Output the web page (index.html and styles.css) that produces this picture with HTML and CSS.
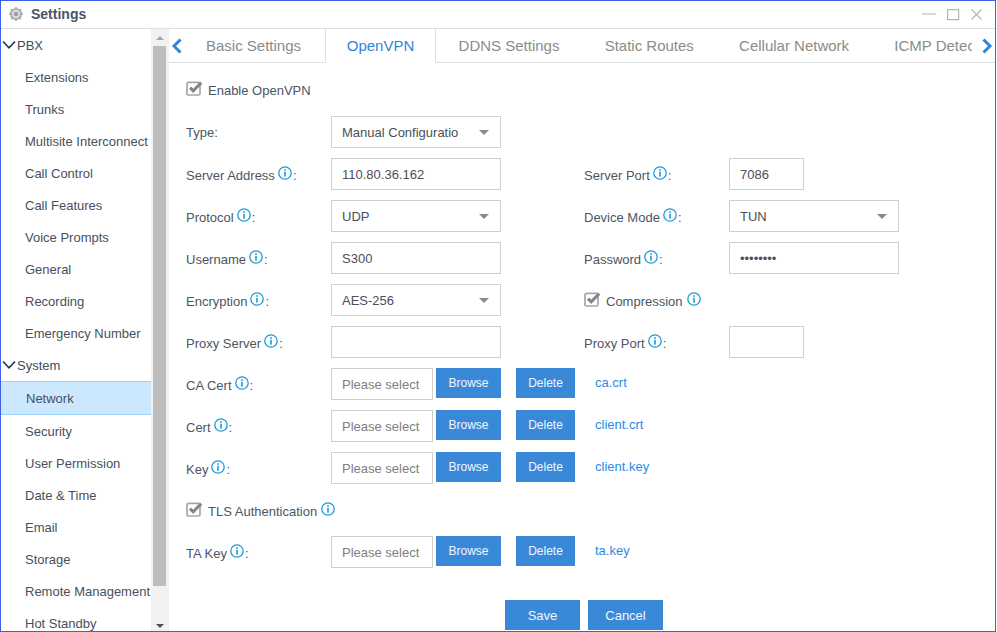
FILE: index.html
```html
<!DOCTYPE html>
<html lang="en">
<head>
<meta charset="utf-8">
<title>Settings</title>
<link rel="stylesheet" href="styles.css">
</head>
<body>
<svg class="defs" width="0" height="0" aria-hidden="true">
  <symbol id="info" viewBox="0 0 14 14">
    <circle cx="7" cy="7" r="6.2" fill="none" stroke="#1c9ad6" stroke-width="1.3"/>
    <rect x="6.2" y="5.8" width="1.6" height="4.8" fill="#1c9ad6"/>
    <rect x="6.2" y="3.2" width="1.6" height="1.6" fill="#1c9ad6"/>
  </symbol>
  <symbol id="check" viewBox="0 0 17 15">
    <rect x="1" y="1.4" width="13" height="12.6" rx="1.6" fill="#fff" stroke="#a6a6a6" stroke-width="1.7"/>
    <path d="M4 6.6 7.2 9.8 15.2 1.6" fill="none" stroke="#858585" stroke-width="3"/>
  </symbol>
  <symbol id="chev" viewBox="0 0 14 10">
    <path d="M1 1.5 7 7.8 13 1.5" fill="none" stroke="#2e3d54" stroke-width="1.8"/>
  </symbol>
</svg>
<div class="window">
  <header class="titlebar">
    <div class="title-left">
      <svg class="gear" width="14" height="14" viewBox="0 0 16 16">
        <circle cx="8" cy="8" r="7" fill="#a9aeb6"/>
        <circle cx="8" cy="8" r="4.8" fill="#dcdfe4"/>
        <circle cx="8" cy="8" r="2.6" fill="#989ea7"/>
        <path d="M8 0v2M8 14v2M0 8h2M14 8h2M2.3 2.3l1.4 1.4M12.3 12.3l1.4 1.4M2.3 13.7l1.4-1.4M12.3 3.7l1.4-1.4" stroke="#a0a5ad" stroke-width="1.6"/>
      </svg>
      <span class="title-text">Settings</span>
    </div>
    <div class="win-controls">
      <svg width="14" height="14" viewBox="0 0 14 14"><path d="M0 7h14" stroke="#c6c6c6" stroke-width="1.4"/></svg>
      <svg width="14" height="14" viewBox="0 0 14 14"><rect x="1.6" y="2.6" width="11" height="10" fill="none" stroke="#b4b4b4" stroke-width="1.2"/></svg>
      <svg width="14" height="14" viewBox="0 0 14 14"><path d="M1.5 2.5 11.5 12.5M11.5 2.5 1.5 12.5" stroke="#b4b4b4" stroke-width="1.1"/></svg>
    </div>
  </header>
  <div class="main">
    <nav class="sidebar">
      <div class="nav-head"><svg class="chev" width="14" height="10"><use href="#chev"/></svg>PBX</div>
      <a class="nav-item">Extensions</a>
      <a class="nav-item">Trunks</a>
      <a class="nav-item">Multisite Interconnect</a>
      <a class="nav-item">Call Control</a>
      <a class="nav-item">Call Features</a>
      <a class="nav-item">Voice Prompts</a>
      <a class="nav-item">General</a>
      <a class="nav-item">Recording</a>
      <a class="nav-item">Emergency Number</a>
      <div class="nav-head"><svg class="chev" width="14" height="10"><use href="#chev"/></svg>System</div>
      <a class="nav-item active">Network</a>
      <a class="nav-item">Security</a>
      <a class="nav-item">User Permission</a>
      <a class="nav-item">Date &amp; Time</a>
      <a class="nav-item">Email</a>
      <a class="nav-item">Storage</a>
      <a class="nav-item">Remote Management</a>
      <a class="nav-item">Hot Standby</a>
    </nav>
    <div class="scrollbar">
      <span class="sb-up"></span>
      <span class="sb-thumb"></span>
      <span class="sb-down"></span>
    </div>
    <section class="content">
      <div class="tabbar">
        <svg class="tab-arrow" width="15" height="16" viewBox="0 0 15 16"><path d="M11.5 1.5 5 8 11.5 14.5" fill="none" stroke="#2f86d8" stroke-width="3"/></svg>
        <div class="tabs">
          <span class="tab first">Basic Settings</span>
          <span class="tab active">OpenVPN</span>
          <span class="tab">DDNS Settings</span>
          <span class="tab">Static Routes</span>
          <span class="tab">Cellular Network</span>
          <span class="tab">ICMP Detection</span>
        </div>
        <svg class="tab-arrow" width="23" height="16" viewBox="0 0 23 16"><path d="M11.5 1.5 18 8 11.5 14.5" fill="none" stroke="#2f86d8" stroke-width="3"/></svg>
      </div>
      <form class="form">
        <div class="row">
          <label class="check"><svg width="17" height="15"><use href="#check"/></svg>Enable OpenVPN</label>
        </div>
        <div class="row">
          <span class="label plain">Type:</span>
          <div class="field select">Manual Configuratio</div>
        </div>
        <div class="row">
          <span class="label">Server Address<svg class="i" width="14" height="14"><use href="#info"/></svg>:</span>
          <div class="field">110.80.36.162</div>
          <span class="label">Server Port<svg class="i" width="14" height="14"><use href="#info"/></svg>:</span>
          <div class="field short">7086</div>
        </div>
        <div class="row">
          <span class="label">Protocol<svg class="i" width="14" height="14"><use href="#info"/></svg>:</span>
          <div class="field select">UDP</div>
          <span class="label">Device Mode<svg class="i" width="14" height="14"><use href="#info"/></svg>:</span>
          <div class="field select">TUN</div>
        </div>
        <div class="row">
          <span class="label">Username<svg class="i" width="14" height="14"><use href="#info"/></svg>:</span>
          <div class="field">S300</div>
          <span class="label">Password<svg class="i" width="14" height="14"><use href="#info"/></svg>:</span>
          <div class="field">••••••••</div>
        </div>
        <div class="row">
          <span class="label">Encryption<svg class="i" width="14" height="14"><use href="#info"/></svg>:</span>
          <div class="field select">AES-256</div>
          <label class="check second low"><svg width="17" height="15"><use href="#check"/></svg>Compression<svg class="i" width="14" height="14"><use href="#info"/></svg></label>
        </div>
        <div class="row">
          <span class="label">Proxy Server<svg class="i" width="14" height="14"><use href="#info"/></svg>:</span>
          <div class="field"></div>
          <span class="label">Proxy Port<svg class="i" width="14" height="14"><use href="#info"/></svg>:</span>
          <div class="field short"></div>
        </div>
        <div class="row">
          <span class="label">CA Cert<svg class="i" width="14" height="14"><use href="#info"/></svg>:</span>
          <div class="files">
            <div class="field file">Please select</div>
            <button type="button" class="btn browse">Browse</button>
            <button type="button" class="btn delete">Delete</button>
            <a class="link">ca.crt</a>
          </div>
        </div>
        <div class="row">
          <span class="label">Cert<svg class="i" width="14" height="14"><use href="#info"/></svg>:</span>
          <div class="files">
            <div class="field file">Please select</div>
            <button type="button" class="btn browse">Browse</button>
            <button type="button" class="btn delete">Delete</button>
            <a class="link">client.crt</a>
          </div>
        </div>
        <div class="row">
          <span class="label">Key<svg class="i" width="14" height="14"><use href="#info"/></svg>:</span>
          <div class="files">
            <div class="field file">Please select</div>
            <button type="button" class="btn browse">Browse</button>
            <button type="button" class="btn delete">Delete</button>
            <a class="link">client.key</a>
          </div>
        </div>
        <div class="row">
          <label class="check low"><svg width="17" height="15"><use href="#check"/></svg>TLS Authentication<svg class="i" width="14" height="14"><use href="#info"/></svg></label>
        </div>
        <div class="row">
          <span class="label">TA Key<svg class="i" width="14" height="14"><use href="#info"/></svg>:</span>
          <div class="files">
            <div class="field file">Please select</div>
            <button type="button" class="btn browse">Browse</button>
            <button type="button" class="btn delete">Delete</button>
            <a class="link">ta.key</a>
          </div>
        </div>
        <div class="actions">
          <button type="button" class="btn action">Save</button>
          <button type="button" class="btn action">Cancel</button>
        </div>
      </form>
    </section>
  </div>
</div>
</body>
</html>
```

FILE: styles.css
```css
* { box-sizing: border-box; }
html, body { margin: 0; padding: 0; width: 997px; height: 632px; overflow: hidden; background: #fff; }
body { font-family: "Liberation Sans", Arial, sans-serif; font-size: 13px; color: #4a5361; }
.defs { display: block; height: 0; }

.window { width: 996px; height: 632px; border: 1px solid #3f5fe8; display: flex; flex-direction: column; overflow: hidden; background: #fff; }

.titlebar { height: 28px; flex: none; display: flex; justify-content: space-between; align-items: center; border-bottom: 1px solid #e0e0e0; padding: 0 11px 1px 8px; }
.title-left { display: flex; align-items: center; gap: 8px; }
.title-text { font-weight: 700; font-size: 14px; color: #47556b; }
.win-controls { display: flex; gap: 10px; align-items: center; }

.main { flex: 1; display: flex; min-height: 0; }

.sidebar { width: 150px; flex: none; overflow: hidden; }
.nav-head { height: 32px; display: flex; align-items: center; padding-left: 1px; white-space: nowrap; color: #414c60; }
.chev { margin-right: 1px; }
.nav-item { display: flex; align-items: center; height: 32px; padding-left: 24px; white-space: nowrap; color: #474f5e; }
.nav-item.active { height: 34px; padding-left: 25px; background: #cce8ff; border-top: 1px solid #99d1ff; border-bottom: 1px solid #99d1ff; }

.scrollbar { width: 18px; flex: none; background: #f1f1f1; display: flex; flex-direction: column; align-items: center; padding-right: 1px; }
.sb-up { margin-top: 7px; border: 4px solid transparent; border-top: 0; border-bottom: 4px solid #a3a3a3; }
.sb-thumb { width: 13px; height: 540px; margin-top: 6px; background: #bdbdbd; }
.sb-down { margin-top: 38px; border: 4px solid transparent; border-bottom: 0; border-top: 4px solid #505050; }

.content { flex: 1; min-width: 0; display: flex; flex-direction: column; }

.tabbar { height: 34px; flex: none; display: flex; align-items: center; border-bottom: 1px solid #e0e0e0; }
.tab-arrow { flex: none; }
.tabs { width: 788px; height: 34px; flex: none; display: flex; overflow: hidden; }
.tab { flex: none; height: 34px; line-height: 33px; padding: 0 22.6px; font-size: 15px; color: #8b8b8b; white-space: nowrap; }
.tab.first { width: 142px; padding: 0 0 0 22px; border-right: 1px solid #e0e0e0; }
.tab.active { width: 110px; padding: 0; text-align: center; color: #2f86d8; background: #fff; border-right: 1px solid #e0e0e0; }

.form { padding: 11px 0 0 17px; display: flex; flex-direction: column; }
.row { height: 42px; flex: none; display: flex; align-items: flex-start; }
.label { width: 145px; height: 32px; flex: none; display: flex; align-items: center; padding-top: 2px; white-space: nowrap; color: #4c5563; }
.label.plain { padding-top: 0; }
.label .i { margin: -5px 1px 0 3px; }
.check { height: 32px; display: flex; align-items: center; color: #4c5563; white-space: nowrap; }
.check > svg:first-child { margin-right: 5px; margin-top: -3px; }
.check .i { margin: -4px 0 0 4px; }
.check.low { padding-top: 2px; }
.check.second { margin-left: 83px; }

.field { width: 170px; height: 32px; flex: none; border: 1px solid #cfcfcf; padding-left: 10px; line-height: 32px; color: #4a4f59; white-space: nowrap; overflow: hidden; background: #fff; }
.row > .field + .label { margin-left: 83px; }
.field.short { width: 75px; }
.field.select { position: relative; }
.field.select::after { content: ""; position: absolute; right: 11px; top: 13px; border: 5px solid transparent; border-bottom: 0; border-top: 5px solid #8a8a8a; }

.files { display: flex; align-items: flex-start; }
.field.file { width: 102px; color: #808080; }
.btn { border: 0; padding: 0; margin: 0; background: #3a89d9; color: #f2f7fc; font-family: inherit; font-size: 12px; height: 30px; }
.browse { width: 65px; margin-left: 3px; }
.delete { width: 59px; margin-left: 15px; }
.link { margin-left: 20px; line-height: 30px; font-size: 13px; color: #2b8be6; white-space: nowrap; }

.actions { margin: 22px 0 0 319px; display: flex; gap: 8px; }
.btn.action { width: 75px; height: 30px; font-size: 13px; }
```
